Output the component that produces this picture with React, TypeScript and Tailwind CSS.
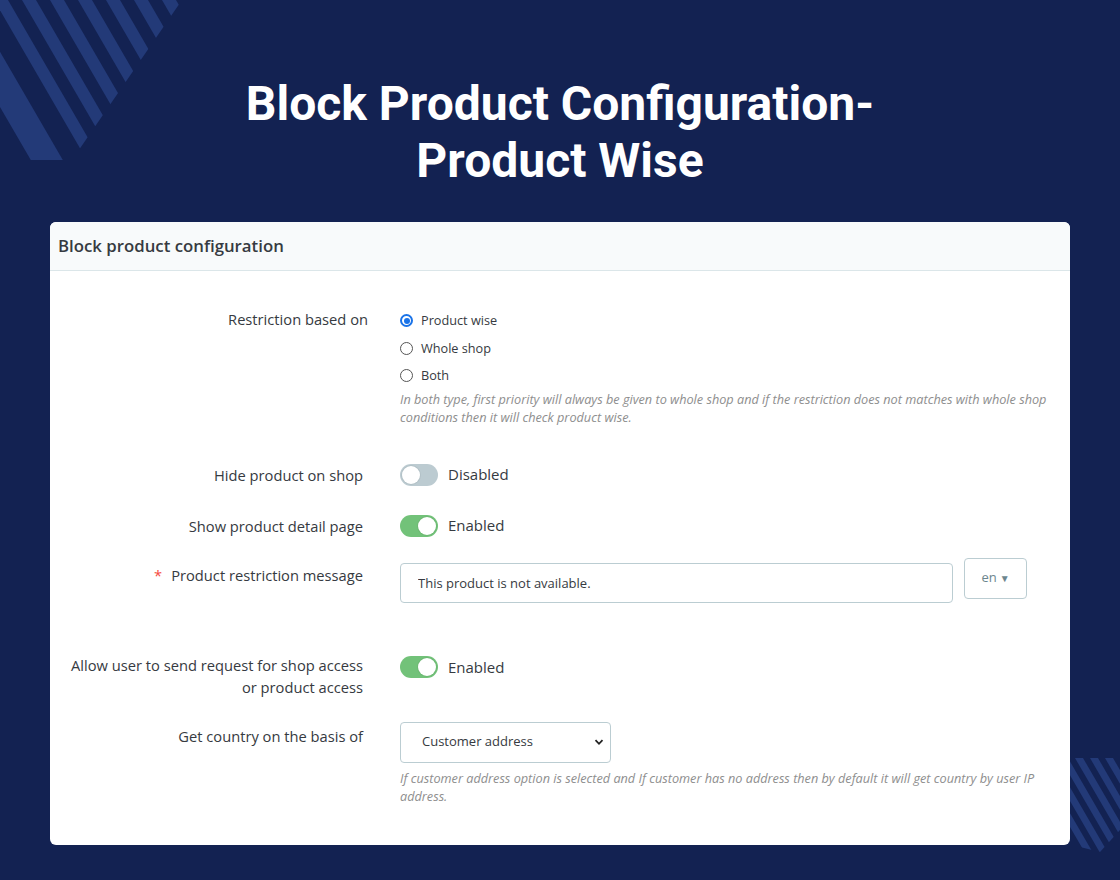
import React from "react";

const labelCls = "w-[320px] shrink-0 text-right text-[14.7px] leading-[22px] text-[#363a41]";

function Toggle({ on }: { on: boolean }) {
  return (
    <div className="flex items-center gap-[10px]">
      <span
        className={`flex h-[22px] w-[38px] items-center rounded-full p-[2px] ${
          on ? "justify-end bg-[#72c279]" : "justify-start bg-[#bccbd1]"
        }`}
      >
        <span className="h-[18px] w-[18px] rounded-full bg-white shadow-[0_0_0_1px_rgba(0,0,0,0.05)]" />
      </span>
      <span className="text-[15px] text-[#363a41]">{on ? "Enabled" : "Disabled"}</span>
    </div>
  );
}

function Radio({ label, checked }: { label: string; checked?: boolean }) {
  return (
    <label className="flex h-[27.5px] items-center gap-[8px] text-[12.7px] text-[#363a41]">
      {checked ? (
        <span className="flex h-[13px] w-[13px] items-center justify-center rounded-full border-[2px] border-[#1a73e8]">
          <span className="h-[6px] w-[6px] rounded-full bg-[#1a73e8]" />
        </span>
      ) : (
        <span className="h-[13px] w-[13px] rounded-full border border-[#555]" />
      )}
      {label}
    </label>
  );
}

function StripesTopLeft() {
  const starts = [0, 28, 56, 84, 112, 140, 168];
  const k = 0.58;
  const h = 200;
  return (
    <svg className="absolute left-0 top-0" width="200" height="170" viewBox="0 0 200 170">
      <defs>
        <clipPath id="cutTL">
          <polygon points="0,0 182,0 72,160 0,160" />
        </clipPath>
      </defs>
      <g clipPath="url(#cutTL)" fill="#233a78">
        {starts.map((x) => (
          <polygon key={x} points={`${x - 6},0 ${x + 8},0 ${x + 8 + h * k},${h} ${x - 6 + h * k},${h}`} />
        ))}
        <polygon points={`-62,0 -30,0 ${-30 + h * k},${h} ${-62 + h * k},${h}`} />
      </g>
    </svg>
  );
}

function StripesBottomRight() {
  const starts = [1030, 1045, 1060, 1075, 1090, 1105, 1120];
  const k = 0.58;
  return (
    <svg className="absolute left-0 top-0" width="1120" height="880" viewBox="0 0 1120 880">
      <defs>
        <clipPath id="cutBR">
          <polygon points="1060,758 1120,758 1120,830 1100,852 1060,842" />
        </clipPath>
      </defs>
      <g clipPath="url(#cutBR)" fill="#233a78">
        {starts.map((x) => (
          <polygon
            key={x}
            points={`${x},758 ${x + 8},758 ${x + 8 + 100 * k},858 ${x + 100 * k},858`}
          />
        ))}
      </g>
    </svg>
  );
}

export default function App() {
  return (
    <div className="relative h-[880px] w-[1120px] overflow-hidden bg-[#132252] font-['Open_Sans',sans-serif]">
      <StripesTopLeft />
      <StripesBottomRight />

      <div className="relative">
        <h1 className="pt-[75px] text-center font-['Roboto',sans-serif] text-[48px] font-bold leading-[57px] text-white">
          Block Product Configuration-
          <br />
          Product Wise
        </h1>

        <div className="mx-[50px] mt-[33px] overflow-hidden rounded-[6px] bg-white">
          <div className="flex h-[49px] items-center border-b border-[#dbe6e9] bg-[#f8fafb] pl-[8px]">
            <h2 className="text-[16.8px] font-semibold text-[#363a41]">Block product configuration</h2>
          </div>

          <div className="pb-[40px] pt-[36px]">
            {/* Restriction type */}
            <div className="flex">
              <div className={`${labelCls} pr-[2px] !leading-[25px]`}>Restriction based on</div>
              <div className="ml-[30px] flex-1 pr-[22px]">
                <Radio label="Product wise" checked />
                <Radio label="Whole shop" />
                <Radio label="Both" />
                <p className="text-[12.7px] italic leading-[18px] text-[#8e8e8e]">
                  In both type, first priority will always be given to whole shop and if the restriction does not
                  matches with whole shop conditions then it will check product wise.
                </p>
              </div>
            </div>

            <div className="mt-[29px] flex h-[40px] items-center">
              <div className={`${labelCls} pr-[7px]`}>Hide product on shop</div>
              <div className="ml-[30px]">
                <Toggle on={false} />
              </div>
            </div>

            <div className="mt-[11px] flex h-[40px] items-center">
              <div className={`${labelCls} pr-[7px]`}>Show product detail page</div>
              <div className="ml-[30px]">
                <Toggle on />
              </div>
            </div>

            {/* Restriction message */}
            <div className="mt-[17px] flex items-start">
              <div className={`${labelCls} pr-[7px] pt-[1px]`}>
                <span className="mr-[9px] text-[#f54c3e]">*</span>
                Product restriction message
              </div>
              <div className="ml-[30px] flex items-start gap-[11px]">
                <input
                  readOnly
                  value="This product is not available."
                  className="h-[40px] w-[553px] rounded-[4px] border border-[#bbcdd2] px-[17px] text-[13px] text-[#363a41] outline-none"
                />
                <button className="-mt-[5px] flex h-[41px] w-[63px] items-center justify-center gap-[3px] rounded-[4px] border border-[#bbcdd2] text-[13px] text-[#6c868e]">
                  en
                  <span className="text-[10px] leading-none">▼</span>
                </button>
              </div>
            </div>

            <div className="mt-[51px] flex items-start">
              <div className={`${labelCls} pr-[7px]`}>
                Allow user to send request for shop access
                <br />
                or product access
              </div>
              <div className="ml-[30px] pt-[2px]">
                <Toggle on />
              </div>
            </div>

            {/* Country source */}
            <div className="mt-[23px] flex items-start">
              <div className={`${labelCls} pr-[7px] pt-[4px]`}>Get country on the basis of</div>
              <div className="ml-[30px] flex-1 pr-[22px]">
                <div className="mt-[1px] flex h-[41px] w-[211px] items-center justify-between rounded-[4px] border border-[#bbcdd2] pl-[21px] pr-[6px] text-[13px] text-[#363a41]">
                  Customer address
                  <svg width="10" height="10" viewBox="0 0 10 10">
                    <path d="M1.5 3.2 5 6.8 8.5 3.2" fill="none" stroke="#222" strokeWidth="1.8" />
                  </svg>
                </div>
                <p className="mt-[6px] text-[12.7px] italic leading-[18px] text-[#8e8e8e]">
                  If customer address option is selected and If customer has no address then by default it will get
                  country by user IP address.
                </p>
              </div>
            </div>
          </div>
        </div>
      </div>
    </div>
  );
}
